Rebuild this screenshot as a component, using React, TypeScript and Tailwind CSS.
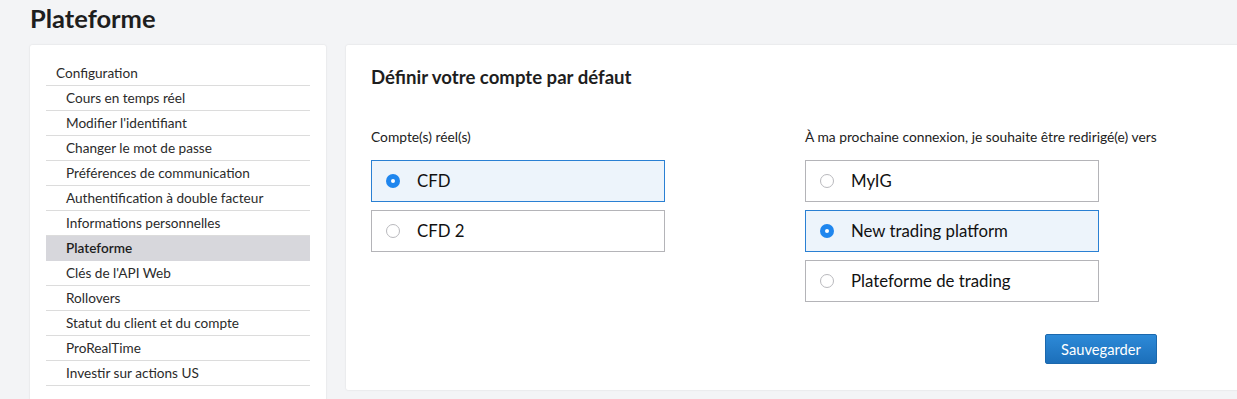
import React from "react";

const menu = [
  "Cours en temps réel",
  "Modifier l'identifiant",
  "Changer le mot de passe",
  "Préférences de communication",
  "Authentification à double facteur",
  "Informations personnelles",
  "Plateforme",
  "Clés de l'API Web",
  "Rollovers",
  "Statut du client et du compte",
  "ProRealTime",
  "Investir sur actions US",
];

function Radio({ checked }: { checked: boolean }) {
  return checked ? (
    <span className="flex h-[14px] w-[14px] shrink-0 items-center justify-center rounded-full bg-[#1f86ee]">
      <span className="h-[4px] w-[4px] rounded-full bg-white" />
    </span>
  ) : (
    <span className="h-[14px] w-[14px] shrink-0 rounded-full border border-[#b9b9bd] bg-white" />
  );
}

function Option({ label, checked }: { label: string; checked?: boolean }) {
  return (
    <div
      className={
        checked
          ? "flex h-[42px] w-[294px] items-center gap-[17px] border border-[#2a80d3] bg-[#edf4fb] pl-[14px]"
          : "flex h-[42px] w-[294px] items-center gap-[17px] border border-[#b4b4b8] bg-white pl-[14px]"
      }
    >
      <Radio checked={!!checked} />
      <span className="text-[16.8px] text-[#111]">{label}</span>
    </div>
  );
}

export default function App() {
  return (
    <div
      className="h-[399px] w-[1237px] overflow-hidden bg-[#f3f4f6] pl-[30px] text-[#222]"
      style={{ fontFamily: "Lato, 'Noto Sans', sans-serif" }}
    >
      <h1 className="pt-[3px] text-[25.5px] font-bold leading-[30px] text-[#1e1e1e]">Plateforme</h1>

      <div className="mt-[12px] flex items-start gap-[20px]">
        {/* Sidebar */}
        <div className="w-[296px] shrink-0 rounded-[2px] bg-white px-[16px] pb-[24px] pt-[16px] shadow-[0_0_2px_rgba(0,0,0,0.12)]">
          <div className="flex h-[25px] items-center border-b border-[#dcdcdc] pl-[10px] text-[13.6px] text-[#2b2b2b]">
            Configuration
          </div>
          {menu.map((m) =>
            m === "Plateforme" ? (
              <div
                key={m}
                className="flex h-[25px] items-center border-b border-[#d7d7dc] bg-[#d7d7dc] pl-[20px] text-[13.6px] font-semibold text-[#1e1e1e]"
              >
                {m}
              </div>
            ) : (
              <div
                key={m}
                className="flex h-[25px] items-center border-b border-[#dcdcdc] pl-[20px] text-[13.6px] text-[#2b2b2b]"
              >
                {m}
              </div>
            )
          )}
        </div>

        {/* Main card */}
        <div className="w-[910px] shrink-0 rounded-[2px] bg-white pb-[26px] pl-[25px] pt-[21px] shadow-[0_0_2px_rgba(0,0,0,0.12)]">
          <h2 className="text-[18.6px] font-bold leading-[22px] text-[#1e1e1e]">Définir votre compte par défaut</h2>

          <div className="mt-[40px] flex gap-[140px]">
            <div className="w-[294px]">
              <p className="mb-[14px] text-[13.8px] leading-[18px] text-[#222]">Compte(s) réel(s)</p>
              <div className="flex flex-col gap-[8px]">
                <Option label="CFD" checked />
                <Option label="CFD 2" />
              </div>
            </div>

            <div className="flex w-[352px] flex-col">
              <p className="mb-[14px] whitespace-nowrap text-[13.8px] leading-[18px] text-[#222]">
                À ma prochaine connexion, je souhaite être redirigé(e) vers
              </p>
              <div className="flex flex-col gap-[8px]">
                <Option label="MyIG" />
                <Option label="New trading platform" checked />
                <Option label="Plateforme de trading" />
              </div>
              <button className="ml-auto mt-[32px] h-[30px] w-[112px] rounded-[2px] border border-[#1b68ad] bg-gradient-to-b from-[#2d8ad8] to-[#1c6fba] text-[14.7px] text-white">
                Sauvegarder
              </button>
            </div>
          </div>
        </div>
      </div>
    </div>
  );
}
